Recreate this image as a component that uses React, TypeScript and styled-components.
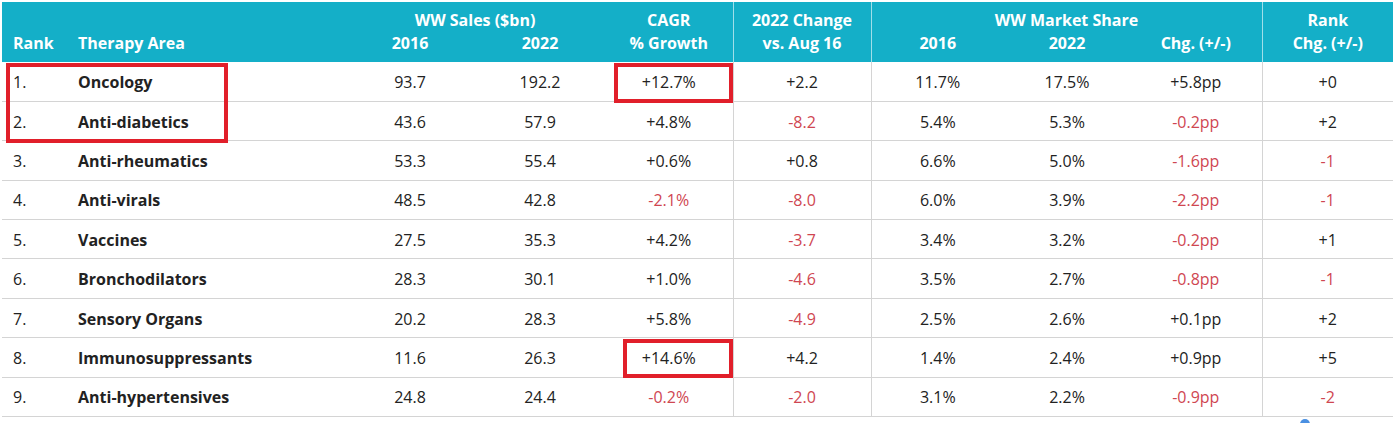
import styled, { createGlobalStyle } from "styled-components";

const GlobalStyle = createGlobalStyle`
  html, body {
    margin: 0;
    padding: 0;
    background: #ffffff;
  }
  body {
    font-family: "Open Sans", "Liberation Sans", sans-serif;
    color: #222222;
  }
`;

type Row = {
  rank: number;
  area: string;
  values: string[];
};

const rows: Row[] = [
  { rank: 1, area: "Oncology", values: ["93.7", "192.2", "+12.7%", "+2.2", "11.7%", "17.5%", "+5.8pp", "+0"] },
  { rank: 2, area: "Anti-diabetics", values: ["43.6", "57.9", "+4.8%", "-8.2", "5.4%", "5.3%", "-0.2pp", "+2"] },
  { rank: 3, area: "Anti-rheumatics", values: ["53.3", "55.4", "+0.6%", "+0.8", "6.6%", "5.0%", "-1.6pp", "-1"] },
  { rank: 4, area: "Anti-virals", values: ["48.5", "42.8", "-2.1%", "-8.0", "6.0%", "3.9%", "-2.2pp", "-1"] },
  { rank: 5, area: "Vaccines", values: ["27.5", "35.3", "+4.2%", "-3.7", "3.4%", "3.2%", "-0.2pp", "+1"] },
  { rank: 6, area: "Bronchodilators", values: ["28.3", "30.1", "+1.0%", "-4.6", "3.5%", "2.7%", "-0.8pp", "-1"] },
  { rank: 7, area: "Sensory Organs", values: ["20.2", "28.3", "+5.8%", "-4.9", "2.5%", "2.6%", "+0.1pp", "+2"] },
  { rank: 8, area: "Immunosuppressants", values: ["11.6", "26.3", "+14.6%", "+4.2", "1.4%", "2.4%", "+0.9pp", "+5"] },
  { rank: 9, area: "Anti-hypertensives", values: ["24.8", "24.4", "-0.2%", "-2.0", "3.1%", "2.2%", "-0.9pp", "-2"] },
];

// column widths, left to right
const widths = [66, 277, 130, 130, 128, 138, 133, 126, 132, 131];
// columns that get a divider on their left edge
const dividers = [5, 6, 9];

export default function App() {
  return (
    <>
      <GlobalStyle />
      <Wrapper>
        <Table>
          <colgroup>
            {widths.map((w, i) => (
              <col key={i} style={{ width: w }} />
            ))}
          </colgroup>
          <thead>
            <tr>
              <HeadCell rowSpan={2} $left>Rank</HeadCell>
              <HeadCell rowSpan={2} $left>Therapy Area</HeadCell>
              <GroupCell colSpan={2}>WW Sales ($bn)</GroupCell>
              <HeadCell rowSpan={2}>
                CAGR
                <br />% Growth
              </HeadCell>
              <HeadCell rowSpan={2} $divider>
                2022 Change
                <br />
                vs. Aug 16
              </HeadCell>
              <GroupCell colSpan={3} $divider>WW Market Share</GroupCell>
              <HeadCell rowSpan={2} $divider>
                Rank
                <br />
                Chg. (+/-)
              </HeadCell>
            </tr>
            <tr>
              <SubCell>2016</SubCell>
              <SubCell>2022</SubCell>
              <SubCell $divider>2016</SubCell>
              <SubCell>2022</SubCell>
              <SubCell>Chg. (+/-)</SubCell>
            </tr>
          </thead>
          <tbody>
            {rows.map((row) => (
              <BodyRow key={row.rank}>
                <RankCell>{row.rank}.</RankCell>
                <AreaCell>{row.area}</AreaCell>
                {row.values.map((v, i) => (
                  <ValueCell key={i} $negative={v.startsWith("-")} $divider={dividers.includes(i + 2)}>
                    {v}
                  </ValueCell>
                ))}
              </BodyRow>
            ))}
          </tbody>
        </Table>
        <Highlight style={{ left: 6, top: 63, width: 222, height: 80 }} />
        <Highlight style={{ left: 614, top: 63, width: 119, height: 40 }} />
        <Highlight style={{ left: 623, top: 339, width: 110, height: 39 }} />
        <CornerDot />
      </Wrapper>
    </>
  );
}

const Wrapper = styled.div`
  position: relative;
  padding: 2px 0 0 2px;
  width: 1397px;
  height: 423px;
  box-sizing: border-box;
  overflow: hidden;
`;

const Table = styled.table`
  border-collapse: collapse;
  table-layout: fixed;
  width: 1391px;
  font-size: 16px;
`;

const HeadBase = styled.th<{ $divider?: boolean; $left?: boolean }>`
  background: #14afc8;
  color: #ffffff;
  font-weight: 700;
  font-size: 16px;
  line-height: 23px;
  padding: 0 10px;
  text-align: ${(p) => (p.$left ? "left" : "center")};
  border-left: ${(p) => (p.$divider ? "1px solid rgba(255, 255, 255, 0.6)" : "none")};
  white-space: nowrap;
`;

const HeadCell = styled(HeadBase)`
  vertical-align: bottom;
  padding-bottom: 7px;
  &:first-child {
    padding-left: 11px;
  }
`;

const GroupCell = styled(HeadBase)`
  vertical-align: top;
  padding-top: 7px;
  height: 30px;
  box-sizing: border-box;
`;

const SubCell = styled(HeadBase)`
  vertical-align: bottom;
  padding-bottom: 7px;
  height: 30px;
  box-sizing: border-box;
`;

const BodyRow = styled.tr`
  height: 39.4px;
  border-bottom: 1px solid #d4d4d4;
`;

const BodyCell = styled.td`
  padding-top: 2px;
  font-size: 16px;
`;

const RankCell = styled(BodyCell)`
  padding-left: 11px;
`;

const AreaCell = styled(BodyCell)`
  padding-left: 10px;
  padding-right: 10px;
  font-weight: 700;
  white-space: nowrap;
`;

const ValueCell = styled(BodyCell)<{ $negative: boolean; $divider: boolean }>`
  text-align: center;
  color: ${(p) => (p.$negative ? "#cf4651" : "#222222")};
  border-left: ${(p) => (p.$divider ? "1px solid #d4d4d4" : "none")};
`;

const Highlight = styled.div`
  position: absolute;
  box-sizing: border-box;
  border: 4px solid #e11f2a;
  pointer-events: none;
`;

const CornerDot = styled.div`
  position: absolute;
  left: 1300px;
  top: 419px;
  width: 10px;
  height: 10px;
  border-radius: 50%;
  background: #4a90e2;
`;
